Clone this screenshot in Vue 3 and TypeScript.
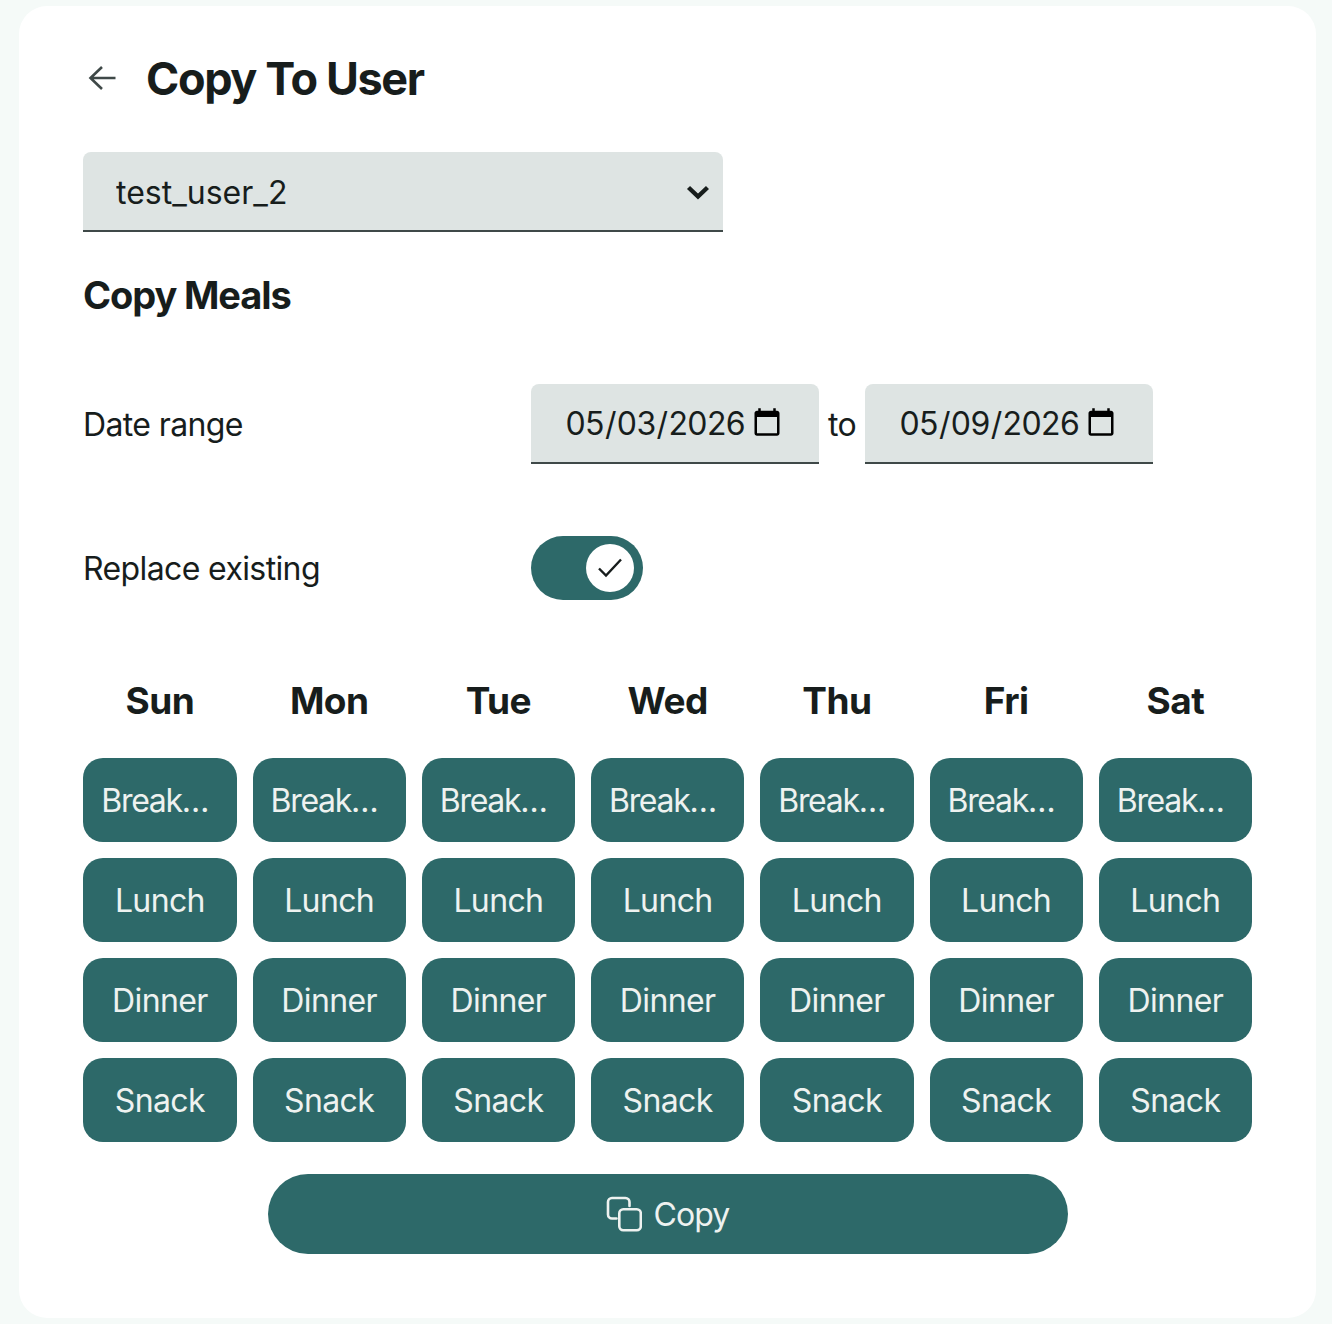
<script setup lang="ts">
interface Meal {
  label: string
  truncated: boolean
}

const days: string[] = ['Sun', 'Mon', 'Tue', 'Wed', 'Thu', 'Fri', 'Sat']
const meals: Meal[] = [
  { label: 'Break…', truncated: true },
  { label: 'Lunch', truncated: false },
  { label: 'Dinner', truncated: false },
  { label: 'Snack', truncated: false },
]
</script>

<template>
  <main class="card">
    <header class="head">
      <svg class="back" viewBox="0 0 40 40" fill="none" aria-hidden="true">
        <path d="M32.500 20H8M19 9 7.500 20 19 31" />
      </svg>
      <h1>Copy To User</h1>
    </header>

    <div class="select-wrap">
      <select class="select">
        <option>test_user_2</option>
      </select>
      <svg class="chev" viewBox="0 0 24 16" fill="none" aria-hidden="true">
        <path d="M2.500 3.500 12 12.500l9.500-9" />
      </svg>
    </div>

    <h2>Copy Meals</h2>

    <div class="row dates">
      <span class="label">Date range</span>
      <input class="date" type="date" value="2026-05-03" />
      <span class="to">to</span>
      <input class="date" type="date" value="2026-05-09" />
    </div>

    <div class="row toggle-row">
      <span class="label">Replace existing</span>
      <div class="toggle">
        <span class="thumb">
          <svg viewBox="0 0 28 28" fill="none" aria-hidden="true">
            <path d="M3 14.500 10 21.500 25 5.500" />
          </svg>
        </span>
      </div>
    </div>

    <div class="grid">
      <div v-for="d in days" :key="d" class="day">{{ d }}</div>
      <template v-for="m in meals" :key="m.label">
        <button v-for="d in days" :key="d" class="meal" :class="{ truncated: m.truncated }">{{ m.label }}</button>
      </template>
    </div>

    <button class="copy">
      <svg viewBox="0 0 36 36" fill="none" aria-hidden="true">
        <rect x="13.300" y="13.300" width="21.500" height="20.900" rx="4" />
        <path d="M23.500 10V6a4 4 0 0 0-4-4H6a4 4 0 0 0-4 4v12.500a4 4 0 0 0 4 4h4.500" />
      </svg>
      <span>Copy</span>
    </button>
  </main>
</template>

<style>
html,
body {
  background: #f5faf8;
}
</style>

<style scoped>
.card {
  box-sizing: border-box;
  width: 1297px;
  margin: 6px 0 6px 19px;
  padding: 42px 64px 64px;
  background: #fff;
  border-radius: 28px;
  color: #171d1c;
  font-family: Inter, "Liberation Sans", sans-serif;
  font-size: 32px;
  letter-spacing: -0.62px;
}
.head {
  display: flex;
  align-items: center;
  gap: 23px;
  height: 60px;
  margin-bottom: 44px;
}
.back {
  width: 40px;
  height: 40px;
  stroke: #3f4948;
  stroke-width: 2.6;
}
h1 {
  margin: 0;
  padding-top: 2px;
  font-size: 45px;
  font-weight: 650;
  letter-spacing: -1.38px;
  line-height: 60px;
}
.select-wrap {
  position: relative;
  width: 640px;
}
.select {
  display: block;
  box-sizing: border-box;
  width: 100%;
  height: 80px;
  padding: 2px 33px 0;
  appearance: none;
  border: 0;
  border-bottom: 2px solid #3f4948;
  border-radius: 8px 8px 0 0;
  background: #dee4e3;
  color: #171d1c;
  font: inherit;
  letter-spacing: 0;
}
.chev {
  position: absolute;
  top: 32px;
  right: 13px;
  width: 24px;
  height: 16px;
  stroke: #171d1c;
  stroke-width: 4.4;
  pointer-events: none;
}
h2 {
  height: 46px;
  margin: 40px 0 0;
  font-size: 38px;
  font-weight: 650;
  letter-spacing: -1.1px;
  line-height: 46px;
}
.row {
  display: flex;
  align-items: center;
}
.label {
  width: 448px;
  flex: none;
}
.dates {
  margin-top: 66px;
}
.date {
  box-sizing: border-box;
  width: 288px;
  height: 80px;
  padding: 0 34px 0 33.5px;
  border: 0;
  border-bottom: 2px solid #3f4948;
  border-radius: 8px 8px 0 0;
  background: #dee4e3;
  color: #171d1c;
  font: inherit;
  letter-spacing: -0.62px;
}
.to {
  width: 46px;
  text-align: center;
}
.toggle-row {
  margin-top: 72px;
}
.toggle {
  display: flex;
  align-items: center;
  justify-content: flex-end;
  box-sizing: border-box;
  width: 112px;
  height: 64px;
  padding-right: 9px;
  border-radius: 32px;
  background: #2d6969;
}
.thumb {
  display: flex;
  align-items: center;
  justify-content: center;
  width: 48px;
  height: 48px;
  border-radius: 50%;
  background: #fff;
}
.thumb svg {
  width: 28px;
  height: 28px;
  stroke: #171d1c;
  stroke-width: 2.4;
}
.grid {
  display: grid;
  grid-template-columns: repeat(7, minmax(0, 1fr));
  gap: 16px;
  margin: 78px 0 0 0.3px;
}
.day {
  height: 46px;
  margin-bottom: 18px;
  font-size: 37px;
  font-weight: 650;
  letter-spacing: -0.55px;
  line-height: 46px;
  text-align: center;
}
.meal {
  height: 84px;
  min-width: 0;
  padding: 0;
  border: 0;
  border-radius: 20px;
  background: #2d6969;
  color: #eef2f0;
  font: inherit;
  letter-spacing: -0.62px;
  white-space: nowrap;
}
.meal.truncated {
  padding-left: 18px;
  letter-spacing: -1.3px;
  text-align: left;
}
.copy {
  display: flex;
  align-items: center;
  justify-content: center;
  gap: 12px;
  width: 800px;
  height: 80px;
  margin: 32px auto 0;
  border: 0;
  border-radius: 40px;
  background: #2d6969;
  color: #eef2f0;
  font: inherit;
  letter-spacing: -0.9px;
}
.copy svg {
  width: 36px;
  height: 36px;
  stroke: #eef2f0;
  stroke-width: 2.6;
  stroke-linecap: round;
}
</style>
